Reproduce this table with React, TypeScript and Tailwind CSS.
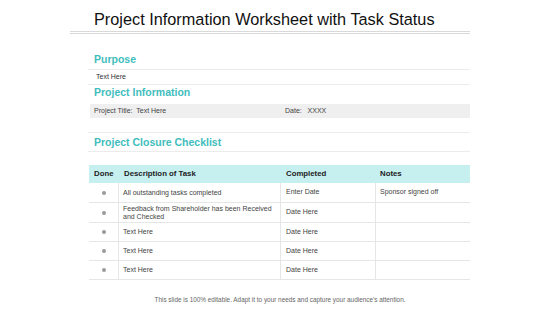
const FONT = { fontFamily: '"Liberation Sans", Arial, sans-serif' }

type Row = { desc: string[]; date: string; note: string; h: string }

const ROWS: Row[] = [
  { desc: ["All outstanding tasks completed"], date: "Enter Date", note: "Sponsor signed off", h: "h-[20px]" },
  {
    desc: ["Feedback from Shareholder has been Received", "and Checked"],
    date: "Date Here",
    note: "",
    h: "h-[20px]",
  },
  { desc: ["Text Here"], date: "Date Here", note: "", h: "h-[19px]" },
  { desc: ["Text Here"], date: "Date Here", note: "", h: "h-[19px]" },
  { desc: ["Text Here"], date: "Date Here", note: "", h: "h-[19px]" },
]

function SectionLabel({ children }: { children: React.ReactNode }) {
  return <span className="text-[10.5px] font-bold leading-[11px] text-[#3fbdbd]">{children}</span>
}

export default function App() {
  return (
    <div className="relative h-[315px] w-[560px] overflow-hidden bg-white text-[#333]" style={FONT}>
      {/* title */}
      <div className="h-[31px] pl-[94px] pt-[9px]">
        <h1 className="text-[16.3px] leading-[20px] text-[#111]">Project Information Worksheet with Task Status</h1>
      </div>
      <div className="ml-[70px] h-[3px] w-[400px] border-y border-[#d9d9d9]" />

      <div className="ml-[88px] w-[382px]">
        {/* purpose */}
        <div className="flex h-[36px] items-end border-b border-[#ececec] pb-[4px] pl-[6px]">
          <SectionLabel>Purpose</SectionLabel>
        </div>
        <div className="flex h-[15px] items-center border-b border-[#ececec] pl-[8px] text-[7px]">Text Here</div>

        {/* project information */}
        <div className="flex h-[15px] items-center pl-[6px]">
          <SectionLabel>Project Information</SectionLabel>
        </div>
        <div className="mt-[4px] ml-[2px] flex h-[14px] items-center bg-[#efefef] text-[7px] text-[#444]">
          <span className="w-[195px] pl-[4px]">Project Title:&nbsp; Text Here</span>
          <span>Date:&nbsp;&nbsp; XXXX</span>
        </div>
        <div className="h-[15px] border-b border-[#ececec]" />

        {/* checklist */}
        <div className="flex h-[19px] items-center border-b border-[#ececec] pl-[6px]">
          <SectionLabel>Project Closure Checklist</SectionLabel>
        </div>

        <div className="mt-[13px] ml-[1px] w-[381px]">
          <div className="grid h-[18px] grid-cols-[30px_162px_95px_94px] items-center bg-[#c6f0f0] text-[7.8px] font-bold text-[#222]">
            <span className="pl-[5px]">Done</span>
            <span className="pl-[5px]">Description of Task</span>
            <span className="pl-[5px]">Completed</span>
            <span className="pl-[4px]">Notes</span>
          </div>
          {ROWS.map((r, i) => (
            <div
              key={i}
              className={`grid ${r.h} grid-cols-[30px_162px_95px_94px] border-b border-[#e6e6e6] text-[7px] text-[#444]`}
            >
              <div className="flex items-center justify-center border-r border-[#e6e6e6]">
                <span className="h-[4px] w-[4px] rounded-full bg-[#9a9a9a]" />
              </div>
              <div className="flex flex-col justify-center border-r border-[#e6e6e6] pl-[4px] leading-[7.5px]">
                {r.desc.map((d) => (
                  <span key={d}>{d}</span>
                ))}
              </div>
              <div className="flex items-center border-r border-[#e6e6e6] pl-[5px]">{r.date}</div>
              <div className="flex items-center pl-[4px]">{r.note}</div>
            </div>
          ))}
        </div>
      </div>

      <p className="mt-[15px] text-center text-[6.4px] text-[#666]">
        This slide is 100% editable. Adapt it to your needs and capture your audience's attention.
      </p>
    </div>
  )
}
